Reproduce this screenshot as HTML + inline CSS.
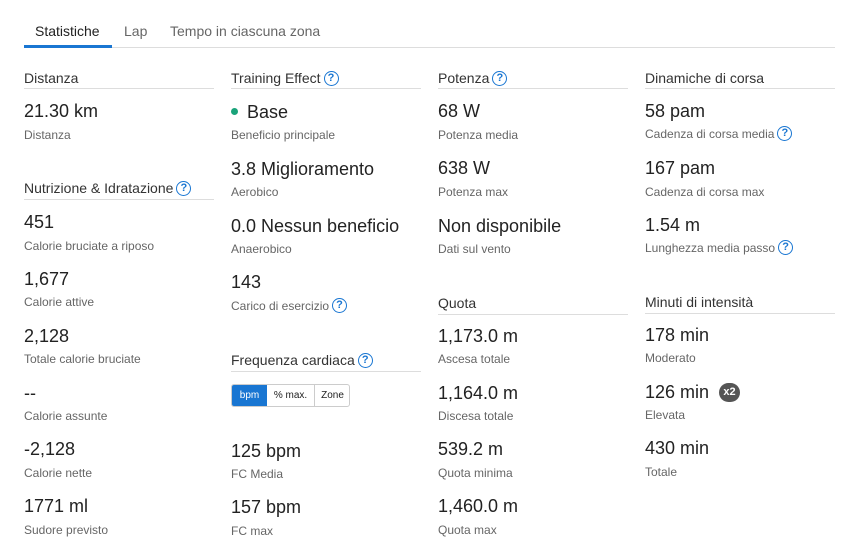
<!DOCTYPE html><html><head><meta charset="utf-8"><style>
body{margin:0;width:854px;height:541px;background:#fff;font-family:"Liberation Sans",sans-serif;position:relative;overflow:hidden}
div{position:absolute;white-space:nowrap}
.h{font-size:14px;color:#333;line-height:20px}
.l{height:1px;background:#ddd;width:190px}
.v{font-size:18px;color:#222;line-height:22px}
.s{font-size:12px;color:#666;line-height:16px}
.q{display:inline-block;width:13px;height:13px;border:1.6px solid #1976d2;border-radius:50%;color:#1976d2;font-size:11px;font-weight:bold;line-height:13px;text-align:center;vertical-align:middle;margin-left:3px;position:relative;top:-1px}
.b{position:absolute;top:0;height:21px;line-height:22px;text-align:center}
</style></head><body>
<div style="left:35px;top:21px;font-size:14px;color:#222;line-height:20px">Statistiche</div>
<div style="left:124px;top:21px;font-size:14px;color:#666;line-height:20px">Lap</div>
<div style="left:170px;top:21px;font-size:14px;color:#666;line-height:20px">Tempo in ciascuna zona</div>
<div style="left:24px;top:47px;width:811px;height:1px;background:#ddd"></div>
<div style="left:24px;top:45px;width:88px;height:3px;background:#1976d2"></div>

<!-- col1 -->
<div class="h" style="left:24px;top:68px">Distanza</div><div class="l" style="left:24px;top:88px"></div>
<div class="v" style="left:24px;top:100px">21.30 km</div><div class="s" style="left:24px;top:127px">Distanza</div>
<div class="h" style="left:24px;top:178px">Nutrizione &amp; Idratazione<span class="q">?</span></div><div class="l" style="left:24px;top:199px"></div>
<div class="v" style="left:24px;top:211px">451</div><div class="s" style="left:24px;top:238px">Calorie bruciate a riposo</div>
<div class="v" style="left:24px;top:268px">1,677</div><div class="s" style="left:24px;top:294px">Calorie attive</div>
<div class="v" style="left:24px;top:325px">2,128</div><div class="s" style="left:24px;top:351px">Totale calorie bruciate</div>
<div class="v" style="left:24px;top:382px">--</div><div class="s" style="left:24px;top:408px">Calorie assunte</div>
<div class="v" style="left:24px;top:438px">-2,128</div><div class="s" style="left:24px;top:465px">Calorie nette</div>
<div class="v" style="left:24px;top:495px">1771 ml</div><div class="s" style="left:24px;top:522px">Sudore previsto</div>

<!-- col2 -->
<div class="h" style="left:231px;top:68px">Training Effect<span class="q">?</span></div><div class="l" style="left:231px;top:88px"></div>
<div style="left:231px;top:108px;width:7px;height:7px;border-radius:50%;background:#1aa37a"></div>
<div class="v" style="left:247px;top:101px">Base</div><div class="s" style="left:231px;top:127px">Beneficio principale</div>
<div class="v" style="left:231px;top:158px">3.8 Miglioramento</div><div class="s" style="left:231px;top:184px">Aerobico</div>
<div class="v" style="left:231px;top:215px">0.0 Nessun beneficio</div><div class="s" style="left:231px;top:241px">Anaerobico</div>
<div class="v" style="left:231px;top:271px">143</div><div class="s" style="left:231px;top:298px">Carico di esercizio<span class="q">?</span></div>
<div class="h" style="left:231px;top:350px">Frequenza cardiaca<span class="q">?</span></div><div class="l" style="left:231px;top:371px"></div>
<div style="left:231px;top:384px;width:117px;height:21px;border:1px solid #ccc;border-radius:3px;font-size:10px;color:#222">
<span class="b" style="left:0;width:35px;background:#1976d2;color:#fff;border-radius:2px 0 0 2px">bpm</span>
<span class="b" style="left:35px;width:47px;border-right:1px solid #ccc">% max.</span>
<span class="b" style="left:83px;width:35px">Zone</span></div>
<div class="v" style="left:231px;top:440px">125 bpm</div><div class="s" style="left:231px;top:466px">FC Media</div>
<div class="v" style="left:231px;top:496px">157 bpm</div><div class="s" style="left:231px;top:523px">FC max</div>

<!-- col3 -->
<div class="h" style="left:438px;top:68px">Potenza<span class="q">?</span></div><div class="l" style="left:438px;top:88px"></div>
<div class="v" style="left:438px;top:100px">68 W</div><div class="s" style="left:438px;top:127px">Potenza media</div>
<div class="v" style="left:438px;top:157px">638 W</div><div class="s" style="left:438px;top:184px">Potenza max</div>
<div class="v" style="left:438px;top:215px">Non disponibile</div><div class="s" style="left:438px;top:241px">Dati sul vento</div>
<div class="h" style="left:438px;top:293px">Quota</div><div class="l" style="left:438px;top:314px"></div>
<div class="v" style="left:438px;top:325px">1,173.0 m</div><div class="s" style="left:438px;top:351px">Ascesa totale</div>
<div class="v" style="left:438px;top:382px">1,164.0 m</div><div class="s" style="left:438px;top:408px">Discesa totale</div>
<div class="v" style="left:438px;top:438px">539.2 m</div><div class="s" style="left:438px;top:465px">Quota minima</div>
<div class="v" style="left:438px;top:495px">1,460.0 m</div><div class="s" style="left:438px;top:522px">Quota max</div>

<!-- col4 -->
<div class="h" style="left:645px;top:68px">Dinamiche di corsa</div><div class="l" style="left:645px;top:88px"></div>
<div class="v" style="left:645px;top:100px">58 pam</div><div class="s" style="left:645px;top:126px">Cadenza di corsa media<span class="q">?</span></div>
<div class="v" style="left:645px;top:157px">167 pam</div><div class="s" style="left:645px;top:184px">Cadenza di corsa max</div>
<div class="v" style="left:645px;top:214px">1.54 m</div><div class="s" style="left:645px;top:240px">Lunghezza media passo<span class="q">?</span></div>
<div class="h" style="left:645px;top:292px">Minuti di intensità</div><div class="l" style="left:645px;top:313px"></div>
<div class="v" style="left:645px;top:324px">178 min</div><div class="s" style="left:645px;top:350px">Moderato</div>
<div class="v" style="left:645px;top:381px">126 min</div>
<div style="left:719px;top:383px;width:21px;height:19px;border-radius:10px;background:#555;color:#fff;font-size:11px;font-weight:bold;line-height:19px;text-align:center">x2</div>
<div class="s" style="left:645px;top:407px">Elevata</div>
<div class="v" style="left:645px;top:437px">430 min</div><div class="s" style="left:645px;top:464px">Totale</div>
</body></html>
